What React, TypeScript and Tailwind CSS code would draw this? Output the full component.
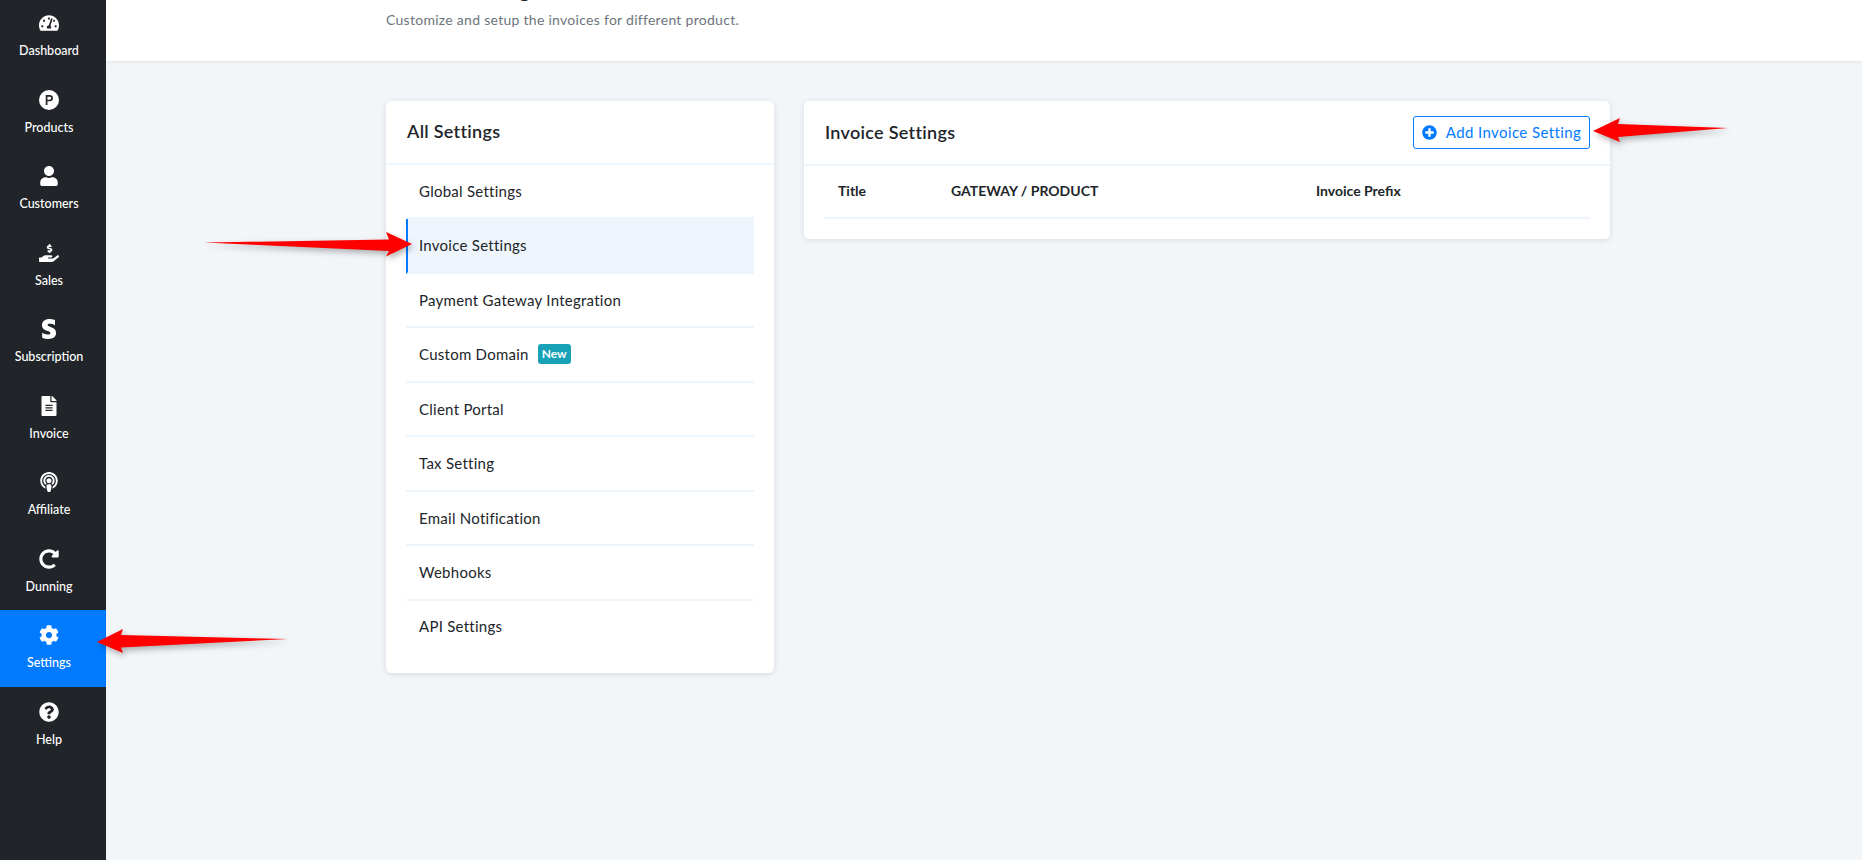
import React from "react";
import {
  FaTachometerAlt,
  FaUser,
  FaHandHoldingUsd,
  FaStripeS,
  FaFileAlt,
  FaPodcast,
  FaRedoAlt,
  FaCog,
  FaQuestionCircle,
  FaPlusCircle,
} from "react-icons/fa";

function ProductIcon({ className }: { className?: string }) {
  return (
    <svg viewBox="0 0 20 20" width="20" height="20" className={className}>
      <circle cx="10" cy="10" r="10" fill="currentColor" />
      <path
        fill="none"
        stroke="#212529"
        strokeWidth="1.7"
        d="M7.600 15V5.800h3c1.500 0 2.500 1 2.500 2.300s-1 2.400-2.500 2.400h-3"
      />
    </svg>
  );
}

const ic = "h-[20px] w-auto";

const nav = [
  { label: "Dashboard", icon: <FaTachometerAlt className={ic} /> },
  { label: "Products", icon: <ProductIcon /> },
  { label: "Customers", icon: <FaUser className={ic} /> },
  { label: "Sales", icon: <FaHandHoldingUsd className={ic} /> },
  { label: "Subscription", icon: <FaStripeS className={ic} /> },
  { label: "Invoice", icon: <FaFileAlt className={ic} /> },
  { label: "Affiliate", icon: <FaPodcast className={ic} /> },
  { label: "Dunning", icon: <FaRedoAlt className={ic} /> },
  { label: "Settings", icon: <FaCog className={ic} />, active: true },
  { label: "Help", icon: <FaQuestionCircle className={ic} /> },
];

const settings = [
  "Global Settings",
  "Invoice Settings",
  "Payment Gateway Integration",
  "Custom Domain",
  "Client Portal",
  "Tax Setting",
  "Email Notification",
  "Webhooks",
  "API Settings",
];

export default function App() {
  return (
    <div
      className="relative flex h-[860px] w-[1862px] overflow-hidden bg-[#f3f6f9] text-[#212529]"
      style={{ fontFamily: '"Lato", "Open Sans", sans-serif' }}
    >
      <aside className="h-full w-[106px] shrink-0 overflow-hidden bg-[#212529]">
        <nav className="-mt-[2px] flex flex-col">
          {nav.map((n) => (
            <div
              key={n.label}
              className={
                "flex h-[76.5px] flex-col items-center pr-2 pt-[15px] text-white " +
                (n.active ? "bg-[#007bff]" : "")
              }
            >
              <div className="flex h-[20px] items-center justify-center">{n.icon}</div>
              <div className="mt-[9px] text-[12.5px] leading-[18px] font-medium">{n.label}</div>
            </div>
          ))}
        </nav>
      </aside>

      <main className="flex min-w-0 flex-1 flex-col">
        <header className="flex h-[61px] shrink-0 flex-col justify-end overflow-hidden bg-white pb-[31px] pl-[280px] shadow-[0_1px_3px_rgba(0,0,0,0.08)]">
          <h1 className="mb-[8px] text-[22px] leading-[26px] font-bold">Invoice Settings</h1>
          <p className="text-[14px] leading-[20px] tracking-[0.28px] text-[#6c757d]">
            Customize and setup the invoices for different product.
          </p>
        </header>

        <div className="flex items-start gap-[30px] pl-[280px] pt-[40px]">
          <section className="w-[388px] rounded-[5px] bg-white shadow-[0_1px_6px_rgba(40,60,90,0.14)]">
            <div className="flex h-[64px] items-center border-b-2 border-[#eef5fc] px-[21px] pb-[2px] text-[18px] font-semibold tracking-[0.3px]">
              All Settings
            </div>
            <ul className="px-[20px] pb-[21.5px]">
              {settings.map((s, i) => (
                <li
                  key={s}
                  className={
                    "flex items-center text-[15px] tracking-[0.26px] " +
                    (i === 0
                      ? "h-[54px] "
                      : i === settings.length - 1
                        ? "h-[51px] "
                        : "h-[54.5px] ") +
                    (i === settings.length - 1 ? "" : "border-b-2 border-[#eef5fc] ") +
                    (i === 1 ? "border-l-2 border-l-[#007bff] bg-[#eef5fc] pl-[11px]" : "pl-[13px]")
                  }
                >
                  {s}
                  {s === "Custom Domain" && (
                    <span className="ml-[9px] rounded-[3px] bg-[#17a2b8] px-[4px] text-[12px] leading-[20px] font-bold tracking-normal text-white">
                      New
                    </span>
                  )}
                </li>
              ))}
            </ul>
          </section>

          <section className="w-[806px] rounded-[5px] bg-white shadow-[0_1px_6px_rgba(40,60,90,0.14)]">
            <div className="flex h-[65px] items-center justify-between border-b-2 border-[#eef5fc] pl-[21px] pr-[20px]">
              <h2 className="text-[18px] font-semibold tracking-[0.3px]">Invoice Settings</h2>
              <button className="flex h-[33px] w-[177px] items-center justify-center gap-[9px] rounded-[3px] border border-[#007bff] text-[15px] font-normal tracking-[0.4px] text-[#007bff]">
                <FaPlusCircle size={15} />
                Add Invoice Setting
              </button>
            </div>
            <div className="px-[20px] pb-[20px]">
              <div className="flex h-[53px] items-center border-b-2 border-[#eef5fc] pb-[2px] text-[14px] font-bold">
                <div className="w-[127px] pl-[14px]">Title</div>
                <div className="w-[365px]">GATEWAY / PRODUCT</div>
                <div>Invoice Prefix</div>
              </div>
            </div>
          </section>
        </div>
      </main>

      <svg
        width="1862"
        height="860"
        className="pointer-events-none absolute left-0 top-0 drop-shadow-[2px_3px_3px_rgba(0,0,0,0.3)]"
      >
        <polygon fill="#ff0000" points="97,642 123,629 121,635 288,639 121,647.500 123,653" />
        <polygon fill="#ff0000" points="412,244 386,232 389,239.500 204,242.500 389,251 386,256.500" />
        <polygon fill="#ff0000" points="1593,131 1620,118 1618,124 1728,128 1618,137 1620,142" />
      </svg>
    </div>
  );
}
